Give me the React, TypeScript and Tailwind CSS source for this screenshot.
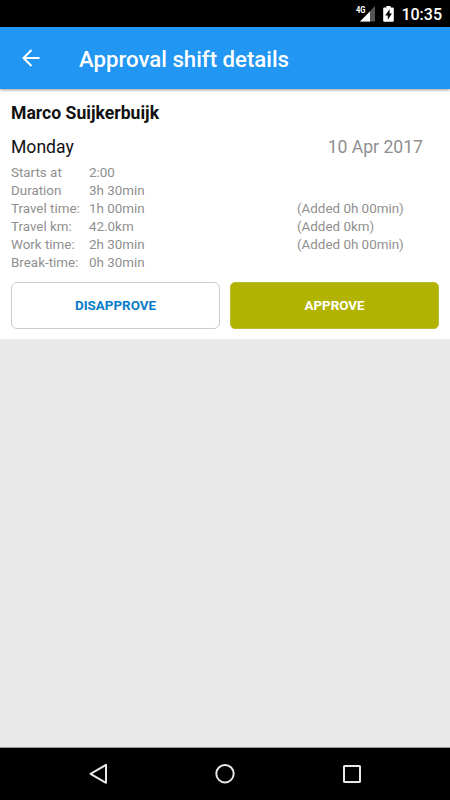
type Detail = {
  label: string;
  value: string;
  added?: string;
};

const details: Detail[] = [
  { label: 'Starts at', value: '2:00' },
  { label: 'Duration', value: '3h 30min' },
  { label: 'Travel time:', value: '1h 00min', added: '(Added 0h 00min)' },
  { label: 'Travel km:', value: '42.0km', added: '(Added 0km)' },
  { label: 'Work time:', value: '2h 30min', added: '(Added 0h 00min)' },
  { label: 'Break-time:', value: '0h 30min' },
];

function StatusBar() {
  return (
    <div className="flex h-[27px] shrink-0 items-center justify-end bg-black pr-[8px] text-white">
      <svg width="20" height="27" viewBox="0 0 20 27" className="mr-[8px]">
        <path d="M20 6v15.500H5z" fill="#555" />
        <path d="M15 11.500v10H5z" fill="#fff" />
        <path d="M0 5h11.500v9H0z" fill="#000" />
        <text
          x="1"
          y="13"
          fill="#fff"
          fontFamily="Roboto"
          fontSize="9"
          fontWeight="700"
          textLength="9.500"
          lengthAdjust="spacingAndGlyphs"
        >
          4G
        </text>
      </svg>
      <svg width="11" height="27" viewBox="0 0 11 27" className="mr-[7px]">
        <path d="M3.400 6h4.200v1.600h2.200q1 0 1 1v12.200q0 1-1 1H1.200q-1 0-1-1V8.600q0-1 1-1h2.200z" fill="#fff" />
        <path d="M6.600 9.200 2.200 15.500h2.600v4.300l4.200-6.200H6.600z" fill="#000" />
      </svg>
      <span className="pt-px text-[16px] leading-[27px] font-medium">10:35</span>
    </div>
  );
}

function Header() {
  return (
    <header className="relative flex h-[62px] shrink-0 items-center bg-[#2196f3] pl-[22px] text-white shadow-[0_1px_3px_rgba(0,0,0,0.4)]">
      <svg width="18" height="18" viewBox="0 0 18 18" fill="none" stroke="currentColor" strokeWidth="2">
        <path d="M17.500 9H1.500M9.500 1 1.500 9l8 8" />
      </svg>
      <h1 className="ml-[39px] pt-[2px] text-[22.200px] leading-[30px] font-medium whitespace-nowrap">
        Approval shift details
      </h1>
    </header>
  );
}

function ShiftCard() {
  return (
    <section className="h-[250px] shrink-0 bg-white px-[11px] pt-[12px]">
      <h2 className="text-[17.600px] leading-[24px] font-bold text-[#111]">Marco Suijkerbuijk</h2>
      <div className="mt-[10px] flex justify-between pr-[16px] text-[17.600px] leading-[24px]">
        <span className="text-[#111]">Monday</span>
        <span className="text-[#8f8f8f]">10 Apr 2017</span>
      </div>
      <dl className="mt-[5px] text-[13.400px] leading-[18px] text-[#8f8f8f]">
        {details.map((item) => (
          <div key={item.label} className="grid h-[18px] grid-cols-[78px_208px_1fr] whitespace-nowrap">
            <dt>{item.label}</dt>
            <dd>{item.value}</dd>
            <dd>{item.added}</dd>
          </div>
        ))}
      </dl>
      <div className="mt-[10px] grid grid-cols-2 gap-[10px] text-[13.400px] font-bold">
        <button type="button" className="h-[47px] rounded-[6px] border border-[#ccc] bg-white pt-[2px] text-[#0a7cc9]">
          DISAPPROVE
        </button>
        <button type="button" className="h-[47px] rounded-[5px] border border-[#b9ba30] bg-[#b2b300] pt-[2px] text-white">
          APPROVE
        </button>
      </div>
    </section>
  );
}

function NavigationBar() {
  return (
    <nav className="flex h-[53px] shrink-0 items-center justify-between border-t border-[#999] bg-black pr-[88px] pl-[88px]">
      <svg width="19" height="22" viewBox="0 0 19 22" fill="none" stroke="#e8e8e8" strokeWidth="2">
        <path d="M18 1.800v18L2.500 10.800z" strokeLinejoin="round" />
      </svg>
      <svg width="20" height="20" viewBox="0 0 20 20" fill="none" stroke="#e8e8e8" strokeWidth="2">
        <circle cx="10" cy="9.700" r="8.700" />
      </svg>
      <svg width="20" height="20" viewBox="0 0 20 20" fill="none" stroke="#e8e8e8" strokeWidth="2">
        <rect x="2" y="2" width="16" height="16" rx="0.500" />
      </svg>
    </nav>
  );
}

export default function App() {
  return (
    <div className="flex h-[800px] w-[450px] flex-col overflow-hidden bg-[#e9e9e9] font-['Roboto',sans-serif]">
      <StatusBar />
      <Header />
      <ShiftCard />
      <main className="flex-1" />
      <NavigationBar />
    </div>
  );
}
